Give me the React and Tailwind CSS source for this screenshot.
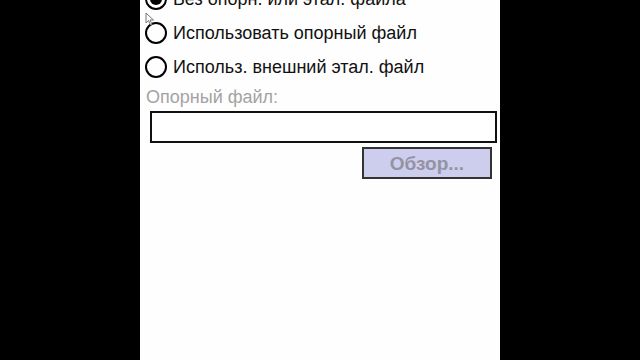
export default function App() {
  const options = [
    { label: "Без опорн. или этал. файла", checked: true },
    { label: "Использовать опорный файл", checked: false },
    { label: "Использ. внешний этал. файл", checked: false },
  ];

  return (
    <div className="w-[640px] h-[360px] bg-black flex justify-center overflow-hidden">
      <div
        className="relative w-[360px] h-full bg-[#fefefe] overflow-hidden"
        style={{ fontFamily: '"Liberation Sans", "DejaVu Sans", sans-serif' }}
      >
        <div className="flex flex-col mt-[-18px]">
          {options.map((o) => (
            <div key={o.label} className="flex items-center h-[34px] pl-[5px]">
              <span className="w-[22px] h-[22px] rounded-full border-2 border-black flex items-center justify-center">
                {o.checked && <span className="w-[12px] h-[12px] rounded-full bg-black" />}
              </span>
              <span className="ml-[6px] text-[18px] text-[#111] leading-none">{o.label}</span>
            </div>
          ))}
        </div>

        <div className="pl-[6px] mt-[3px] text-[18px] leading-[20px] text-[#a3a3a3]">Опорный файл:</div>

        <div className="ml-[10px] mr-[3px] mt-[4px] h-[32px] border-2 border-[#111] bg-white" />

        <div className="flex justify-end mr-[8px] mt-[4px]">
          <button className="w-[130px] h-[32px] border-2 border-[#333] bg-[#cdcdee] text-[19px] font-bold text-[#9393a3] leading-none">
            Обзор...
          </button>
        </div>

        {/* mouse pointer */}
        <svg className="absolute left-[5px] top-[12px]" width="10" height="14" viewBox="0 0 10 14">
          <path d="M1 1 L1 11 L3.5 8.5 L5.5 13 L7 12.3 L5 8 L8.5 8 Z" fill="white" stroke="#777" strokeWidth="1" />
        </svg>
      </div>
    </div>
  );
}
